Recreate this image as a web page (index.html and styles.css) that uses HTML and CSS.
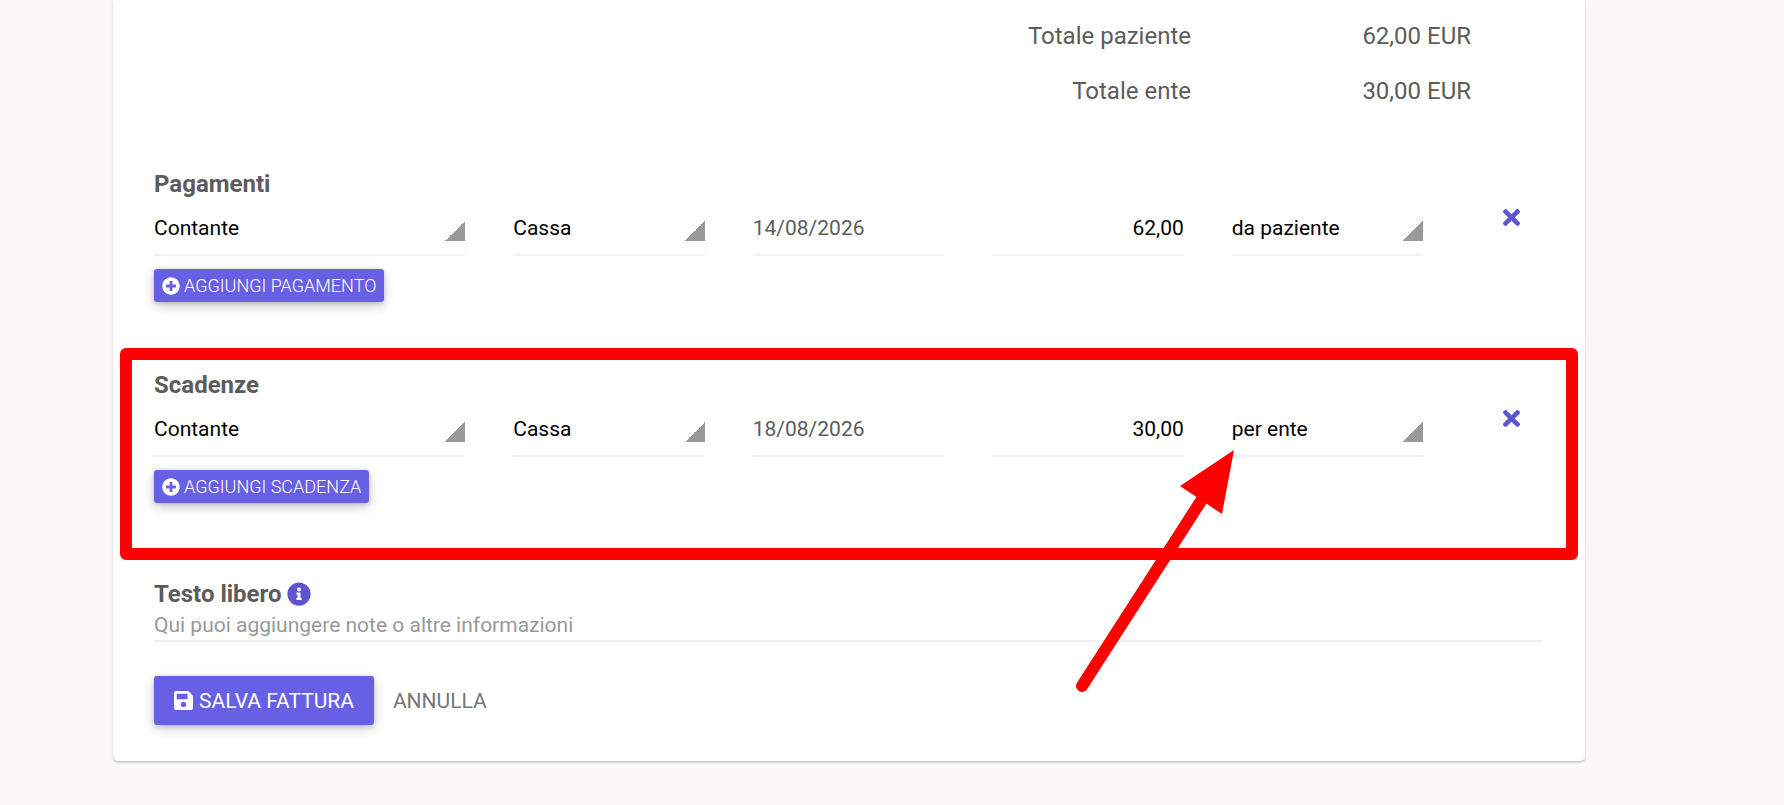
FILE: index.html
```
<!DOCTYPE html>
<html lang="it">

<head>
  <meta charset="UTF-8">
  <meta name="viewport" content="width=device-width, initial-scale=1.0">
  <title>Fattura</title>
  <link rel="stylesheet" href="styles.css">
</head>

<body>
  <form class="card">
    <table class="totals">
      <tr>
        <th scope="row">Totale paziente</th>
        <td>62,00 EUR</td>
      </tr>
      <tr>
        <th scope="row">Totale ente</th>
        <td>30,00 EUR</td>
      </tr>
    </table>

    <section class="section">
      <h3>Pagamenti</h3>
      <div class="row">
        <select class="field wide" aria-label="Metodo di pagamento">
          <option>Contante</option>
        </select>
        <select class="field" aria-label="Conto">
          <option>Cassa</option>
        </select>
        <input class="field date" type="text" value="14/08/2026" aria-label="Data pagamento">
        <input class="field amount" type="text" value="62,00" aria-label="Importo">
        <select class="field" aria-label="Pagamento da">
          <option>da paziente</option>
        </select>
        <button class="remove" type="button" aria-label="Elimina pagamento">
          <svg viewBox="0 80 352 352"><path d="M242.72 256l100.07-100.07c12.28-12.28 12.28-32.19 0-44.48l-22.24-22.24c-12.28-12.28-32.19-12.28-44.48 0L176 189.28 75.93 89.21c-12.28-12.28-32.19-12.28-44.48 0L9.21 111.45c-12.28 12.28-12.28 32.19 0 44.48L109.28 256 9.21 356.07c-12.28 12.28-12.28 32.19 0 44.48l22.24 22.24c12.28 12.28 32.2 12.28 44.48 0L176 322.72l100.07 100.07c12.28 12.28 32.2 12.28 44.48 0l22.24-22.24c12.28-12.28 12.28-32.19 0-44.48L242.72 256z"/></svg>
        </button>
      </div>
      <button class="btn btn-small" type="button">
        <svg viewBox="0 0 512 512"><path d="M256 8C119 8 8 119 8 256s111 248 248 248 248-111 248-248S393 8 256 8zm144 276c0 6.600-5.400 12-12 12h-92v92c0 6.600-5.400 12-12 12h-56c-6.600 0-12-5.400-12-12v-92h-92c-6.600 0-12-5.400-12-12v-56c0-6.600 5.400-12 12-12h92v-92c0-6.600 5.400-12 12-12h56c6.600 0 12 5.400 12 12v92h92c6.600 0 12 5.400 12 12v56z"/></svg>
        AGGIUNGI PAGAMENTO
      </button>
    </section>

    <section class="section highlighted">
      <h3>Scadenze</h3>
      <div class="row">
        <select class="field wide" aria-label="Metodo di pagamento">
          <option>Contante</option>
        </select>
        <select class="field" aria-label="Conto">
          <option>Cassa</option>
        </select>
        <input class="field date" type="text" value="18/08/2026" aria-label="Data scadenza">
        <input class="field amount" type="text" value="30,00" aria-label="Importo">
        <select class="field" aria-label="Scadenza per">
          <option>per ente</option>
        </select>
        <button class="remove" type="button" aria-label="Elimina scadenza">
          <svg viewBox="0 80 352 352"><path d="M242.72 256l100.07-100.07c12.28-12.28 12.28-32.19 0-44.48l-22.24-22.24c-12.28-12.28-32.19-12.28-44.48 0L176 189.28 75.93 89.21c-12.28-12.28-32.19-12.28-44.48 0L9.21 111.45c-12.28 12.28-12.28 32.19 0 44.48L109.28 256 9.21 356.07c-12.28 12.28-12.28 32.19 0 44.48l22.24 22.24c12.28 12.28 32.2 12.28 44.48 0L176 322.72l100.07 100.07c12.28 12.28 32.2 12.28 44.48 0l22.24-22.24c12.28-12.28 12.28-32.19 0-44.48L242.72 256z"/></svg>
        </button>
      </div>
      <button class="btn btn-small" type="button">
        <svg viewBox="0 0 512 512"><path d="M256 8C119 8 8 119 8 256s111 248 248 248 248-111 248-248S393 8 256 8zm144 276c0 6.600-5.400 12-12 12h-92v92c0 6.600-5.400 12-12 12h-56c-6.600 0-12-5.400-12-12v-92h-92c-6.600 0-12-5.400-12-12v-56c0-6.600 5.400-12 12-12h92v-92c0-6.600 5.400-12 12-12h56c6.600 0 12 5.400 12 12v92h92c6.600 0 12 5.400 12 12v56z"/></svg>
        AGGIUNGI SCADENZA
      </button>
      <div class="highlight"></div>
      <!-- arrow pointing at the "per ente" select -->
      <svg class="arrow" viewBox="0 0 160 244" aria-hidden="true">
        <path class="shaft" d="M8 236L127 51"/>
        <path class="head" d="M160 0L106 36L148 64z"/>
      </svg>
    </section>

    <section class="notes">
      <h3>
        <label for="note">Testo libero</label>
        <svg class="info" viewBox="0 0 512 512"><path d="M256 8C119.043 8 8 119.083 8 256c0 136.997 111.043 248 248 248s248-111.003 248-248C504 119.083 392.957 8 256 8zm0 110c23.196 0 42 18.804 42 42s-18.804 42-42 42-42-18.804-42-42 18.804-42 42-42zm56 254c0 6.627-5.373 12-12 12h-88c-6.627 0-12-5.373-12-12v-24c0-6.627 5.373-12 12-12h12v-64h-12c-6.627 0-12-5.373-12-12v-24c0-6.627 5.373-12 12-12h64c6.627 0 12 5.373 12 12v100h12c6.627 0 12 5.373 12 12v24z"/></svg>
      </h3>
      <textarea id="note" rows="1" placeholder="Qui puoi aggiungere note o altre informazioni"></textarea>
    </section>

    <div class="actions">
      <button class="btn btn-save" type="submit">
        <svg viewBox="0 32 448 448"><path d="M433.941 129.941l-83.882-83.882A48 48 0 0 0 316.118 32H48C21.490 32 0 53.490 0 80v352c0 26.510 21.490 48 48 48h352c26.510 0 48-21.490 48-48V163.882a48 48 0 0 0-14.059-33.941zM224 416c-35.346 0-64-28.654-64-64 0-35.346 28.654-64 64-64s64 28.654 64 64c0 35.346-28.654 64-64 64zm96-304.520V212c0 6.627-5.373 12-12 12H76c-6.627 0-12-5.373-12-12V108c0-6.627 5.373-12 12-12h228.520c3.183 0 6.235 1.264 8.485 3.515l3.480 3.480A11.996 11.996 0 0 1 320 111.480z"/></svg>
        SALVA FATTURA
      </button>
      <button class="btn-cancel" type="button">ANNULLA</button>
    </div>
  </form>
</body>

</html>
```

FILE: styles.css
```
* {
  box-sizing: border-box;
}

body {
  margin: 0;
  padding: 0 199px 44px 113px;
  background: #faf9f7;
  color: #5c5c5c;
  font-family: Roboto, "Liberation Sans", sans-serif;
  font-size: 21px;
}

button,
input,
select,
textarea {
  font-family: inherit;
  font-size: inherit;
  border: none;
  border-radius: 0;
  background: none;
  padding: 0;
  margin: 0;
}

.card {
  padding: 9px 42px 36px 41px;
  background: #fff;
  border-radius: 0 0 5px 5px;
  box-shadow: 0 2px 2px rgba(0, 0, 0, 0.16), 0 0 2px rgba(0, 0, 0, 0.12);
}

/* totals */
.totals {
  margin: 0 72px 49px auto;
  border-collapse: collapse;
  font-size: 24px;
  line-height: 55px;
}

.totals th,
.totals td {
  padding: 0;
  font-weight: 400;
  text-align: right;
}

.totals td {
  width: 280px;
}

h3 {
  margin: 0;
  font-size: 24px;
  font-weight: 700;
  line-height: 32px;
}

/* payment rows */
.section {
  position: relative;
  margin-bottom: 67px;
}

.section.highlighted {
  margin-bottom: 75px;
}

.row {
  display: grid;
  grid-template-columns: repeat(12, minmax(0, 1fr));
  column-gap: 48px;
  margin-bottom: 13px;
}

.field {
  grid-column: span 2;
  width: 100%;
  height: 56px;
  padding-top: 2px;
  border-bottom: 2px solid #f2f2f2;
  color: #000;
}

.field.wide {
  grid-column: span 3;
}

select.field {
  appearance: none;
  background: linear-gradient(135deg, transparent 50%, #999 50%) no-repeat;
  background-position: right 0 top 21px;
  background-size: 20px 20px;
}

.field.date {
  color: #5c5c5c;
}

.field.amount {
  text-align: right;
}

.remove {
  height: 34px;
  padding-left: 8px;
  color: #5d55d0;
  cursor: pointer;
}

.remove svg {
  display: block;
  width: 17px;
  height: 17px;
  margin: 0 auto;
}

svg {
  fill: currentColor;
}

/* buttons */
.btn {
  display: flex;
  align-items: center;
  background: #6860e4;
  color: #fff;
  border-radius: 3px;
  box-shadow: 0 4px 12px rgba(0, 0, 0, 0.2), 0 1px 4px rgba(0, 0, 0, 0.16);
  cursor: pointer;
}

.btn-small {
  gap: 4px;
  height: 33px;
  padding: 0 8px;
  font-size: 18px;
  font-weight: 300;
}

.btn-small svg {
  width: 18px;
  height: 18px;
}

.btn-save {
  gap: 6px;
  height: 49px;
  padding: 0 20px;
}

.btn-save svg {
  width: 19px;
  height: 19px;
}

.btn-cancel {
  color: #777;
  cursor: pointer;
}

/* markers drawn over the form */
.highlight {
  position: absolute;
  top: -21px;
  right: -35px;
  bottom: -57px;
  left: -34px;
  border: 12px solid #f00;
  border-radius: 6px;
  pointer-events: none;
}

.arrow {
  position: absolute;
  top: 81px;
  right: 309px;
  width: 160px;
  height: 244px;
  pointer-events: none;
}

.arrow .shaft {
  fill: none;
  stroke: #f00;
  stroke-width: 12;
  stroke-linecap: round;
}

.arrow .head {
  fill: #f00;
}

/* notes */
.notes {
  margin-bottom: 34px;
}

.notes h3 {
  display: flex;
  align-items: center;
  gap: 5px;
}

.info {
  width: 24px;
  height: 24px;
  color: #5d55d0;
}

textarea {
  display: block;
  width: 100%;
  height: 32px;
  line-height: 30px;
  border-bottom: 2px solid #eee;
  resize: none;
  overflow: hidden;
}

textarea::placeholder {
  color: #999;
}

.actions {
  display: flex;
  align-items: center;
  gap: 19px;
}
```
